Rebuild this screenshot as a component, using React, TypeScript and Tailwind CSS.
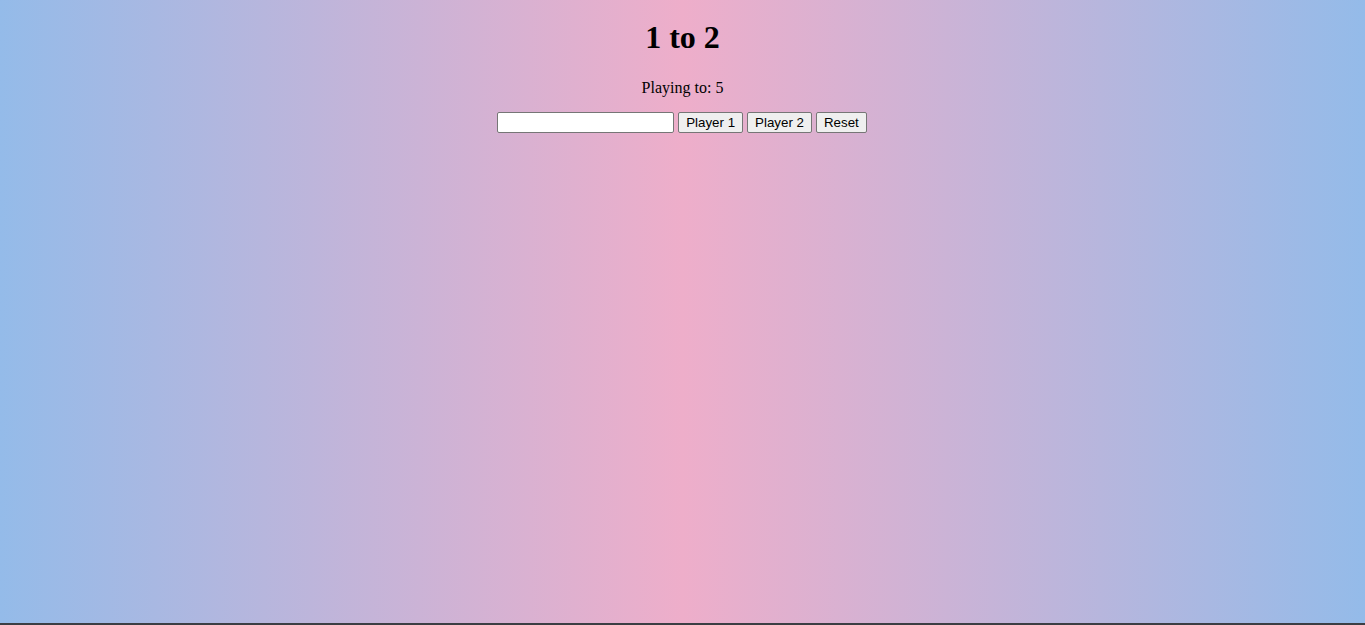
import { useState } from "react";

export default function App() {
  const [target, setTarget] = useState("");
  const [score, setScore] = useState({ p1: 1, p2: 2 });
  const playingTo = 5;

  return (
    <div className="flex h-screen flex-col border-b-2 border-[#3b3e43] bg-[linear-gradient(90deg,#94bbe9_0%,#eeaeca_50%,#94bbe9_100%)] font-['Liberation_Serif',serif] text-black">
      <h1 className="mt-[19px] text-center text-[32px] font-bold leading-[37px]">
        {score.p1} to {score.p2}
      </h1>
      <p className="mt-[23px] text-center text-[16px] leading-[18px]">
        Playing to: {playingTo}
      </p>
      <div className="mt-[15px] flex items-center justify-center gap-1 pr-[1px] font-['Liberation_Sans',Arial,sans-serif] text-[13.33px]">
        <input
          className="h-[21px] w-[177px] rounded-[2px] border border-[#767676] bg-white px-[2px] py-[1px] outline-none"
          type="number"
          value={target}
          onChange={(e) => setTarget(e.target.value)}
        />
        <button
          className="h-[21px] rounded-[2px] border border-[#767676] bg-[#efefef] px-[7px] leading-[17px]"
          type="button"
          onClick={() => setScore({ ...score, p1: score.p1 + 1 })}
        >
          Player 1
        </button>
        <button
          className="h-[21px] rounded-[2px] border border-[#767676] bg-[#efefef] px-[7px] leading-[17px]"
          type="button"
          onClick={() => setScore({ ...score, p2: score.p2 + 1 })}
        >
          Player 2
        </button>
        <button
          className="h-[21px] rounded-[2px] border border-[#767676] bg-[#efefef] px-[7px] leading-[17px]"
          type="button"
          onClick={() => setScore({ p1: 0, p2: 0 })}
        >
          Reset
        </button>
      </div>
    </div>
  );
}
